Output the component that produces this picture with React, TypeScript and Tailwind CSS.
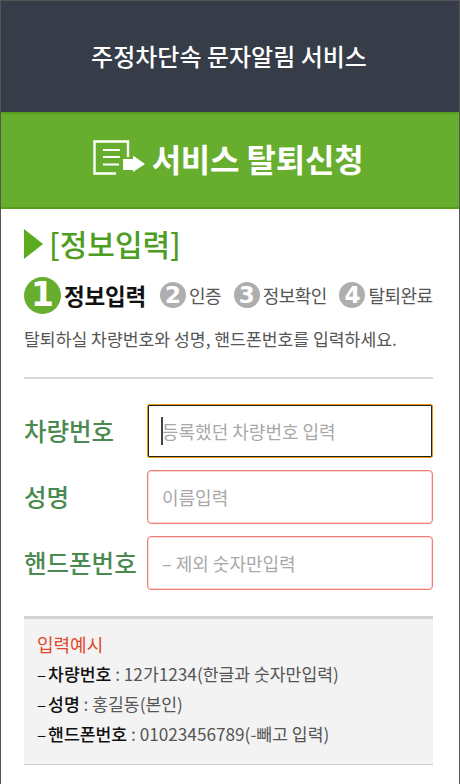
import React from "react";

const KR = "font-['Noto_Sans_CJK_KR','Noto_Sans',sans-serif]";

// 문서 + 화살표 아이콘
function DocIcon() {
  return (
    <svg width="52" height="36" viewBox="0 0 52 36" fill="none" className="mr-[7px] shrink-0">
      <path d="M23 33.5H1.5V1.5H35V17" stroke="#fff" strokeWidth="2.4" />
      <path d="M10 10H27M10 17H27M10 24.5H26" stroke="#fff" strokeWidth="1.8" />
      <path d="M30 19H40V15.5L52 24L40 32V30H30Z" fill="#fff" />
    </svg>
  );
}

function Step({ n, label }: { n: number; label: string }) {
  return (
    <div className="flex items-center gap-[3px]">
      <span className="flex h-[26px] w-[26px] items-center justify-center rounded-full bg-[#aeaeae] font-['DejaVu_Sans',sans-serif] text-[23px] font-bold text-white">
        {n}
      </span>
      <span className="text-[18px] leading-none tracking-[-0.5px] text-[#555]">{label}</span>
    </div>
  );
}

function Field({
  label,
  placeholder,
  focused,
}: {
  label: string;
  placeholder: string;
  focused?: boolean;
}) {
  return (
    <div className="flex items-center">
      <label className="w-[123px] shrink-0 whitespace-nowrap text-[24.5px] font-medium leading-none text-[#4a8a50]">
        {label}
      </label>
      <div className="relative flex-1">
        <input
          readOnly
          placeholder={placeholder}
          className={
            focused
              ? "h-[54px] w-full rounded-[2px] border border-[#e39a12] px-[14px] text-[18px] shadow-[inset_0_0_0_1px_#222] outline-none placeholder:text-[#a8a8a8]"
              : "h-[54px] w-full rounded-[4px] border border-[#f07d76] px-[14px] text-[18px] shadow-[inset_0_0_0_1px_#fbd9d6] outline-none placeholder:text-[#a8a8a8]"
          }
        />
        {focused && <span className="absolute left-[14px] top-[13px] h-[28px] w-[2px] bg-[#444]" />}
      </div>
    </div>
  );
}

function ExampleLine({ name, value }: { name: string; value: string }) {
  return (
    <p className="h-[30px] whitespace-nowrap text-[17.2px] leading-[30px] text-[#555]">
      <span className="tracking-[-1px] text-[#111]">– </span>
      <span className="font-medium text-[#111]">{name}</span> : {value}
    </p>
  );
}

export default function App() {
  return (
    <div className={`h-[784px] w-[460px] overflow-hidden border-x border-t border-[#555] bg-white ${KR}`}>
      <header className="flex h-[111px] items-center justify-center bg-[#363c48] pb-[2px] pr-[2px] text-[24px] font-medium text-white">
        주정차단속 문자알림 서비스
      </header>

      <div className="flex h-[97px] items-center justify-center border-y-2 border-[#599f1a] bg-[#68ae2e] pb-[6px] pr-[4px] text-[32px] font-bold text-white">
        <DocIcon />
        <span className="tracking-[-0.2px]">서비스 탈퇴신청</span>
      </div>

      <main className="pl-[23px] pr-[26px]">
        {/* 단계 제목 */}
        <div className="mt-[13px] flex h-[44px] items-center">
          <span className="h-0 w-0 border-y-[15px] border-l-[19px] border-y-transparent border-l-[#5aab1e]" />
          <h2 className="ml-[6px] pb-[3px] text-[30px] font-medium leading-none text-[#4c9d20]">[정보입력]</h2>
        </div>

        {/* 진행 단계 */}
        <div className="mt-[10px] flex h-[38px] items-center whitespace-nowrap">
          <div className="flex items-center gap-[3px]">
            <span className="flex h-[37px] w-[37px] items-center justify-center rounded-full bg-[#68ae2e] font-['DejaVu_Sans',sans-serif] text-[33px] font-bold text-white">
              1
            </span>
            <span className="text-[22.5px] font-bold leading-none tracking-[-0.2px] text-[#111]">정보입력</span>
          </div>
          <div className="ml-[14px] flex items-center gap-[12.5px]">
            <Step n={2} label="인증" />
            <Step n={3} label="정보확인" />
            <Step n={4} label="탈퇴완료" />
          </div>
        </div>

        <p className="mt-[11px] whitespace-nowrap text-[17.2px] leading-[28px] text-[#555]">
          탈퇴하실 차량번호와 성명, 핸드폰번호를 입력하세요.
        </p>

        <div className="mt-[24px] h-[2px] bg-[#d8d8d8]" />

        {/* 입력 폼 */}
        <div className="mt-[25px] flex flex-col gap-[12px]">
          <Field label="차량번호" placeholder="등록했던 차량번호 입력" focused />
          <Field label="성명" placeholder="이름입력" />
          <Field label="핸드폰번호" placeholder="– 제외 숫자만입력" />
        </div>

        {/* 입력예시 */}
        <div className="mt-[26px] h-[149px] border-t-[3px] border-b border-t-[#d2d2d2] border-b-[#d2d2d2] bg-[#f3f3f3] px-[13px] pt-[11px]">
          <p className="mb-[1px] text-[18px] leading-[28px] text-[#e2492c]">입력예시</p>
          <ExampleLine name="차량번호" value="12가1234(한글과 숫자만입력)" />
          <ExampleLine name="성명" value="홍길동(본인)" />
          <ExampleLine name="핸드폰번호" value="01023456789(-빼고 입력)" />
        </div>
      </main>
    </div>
  );
}
